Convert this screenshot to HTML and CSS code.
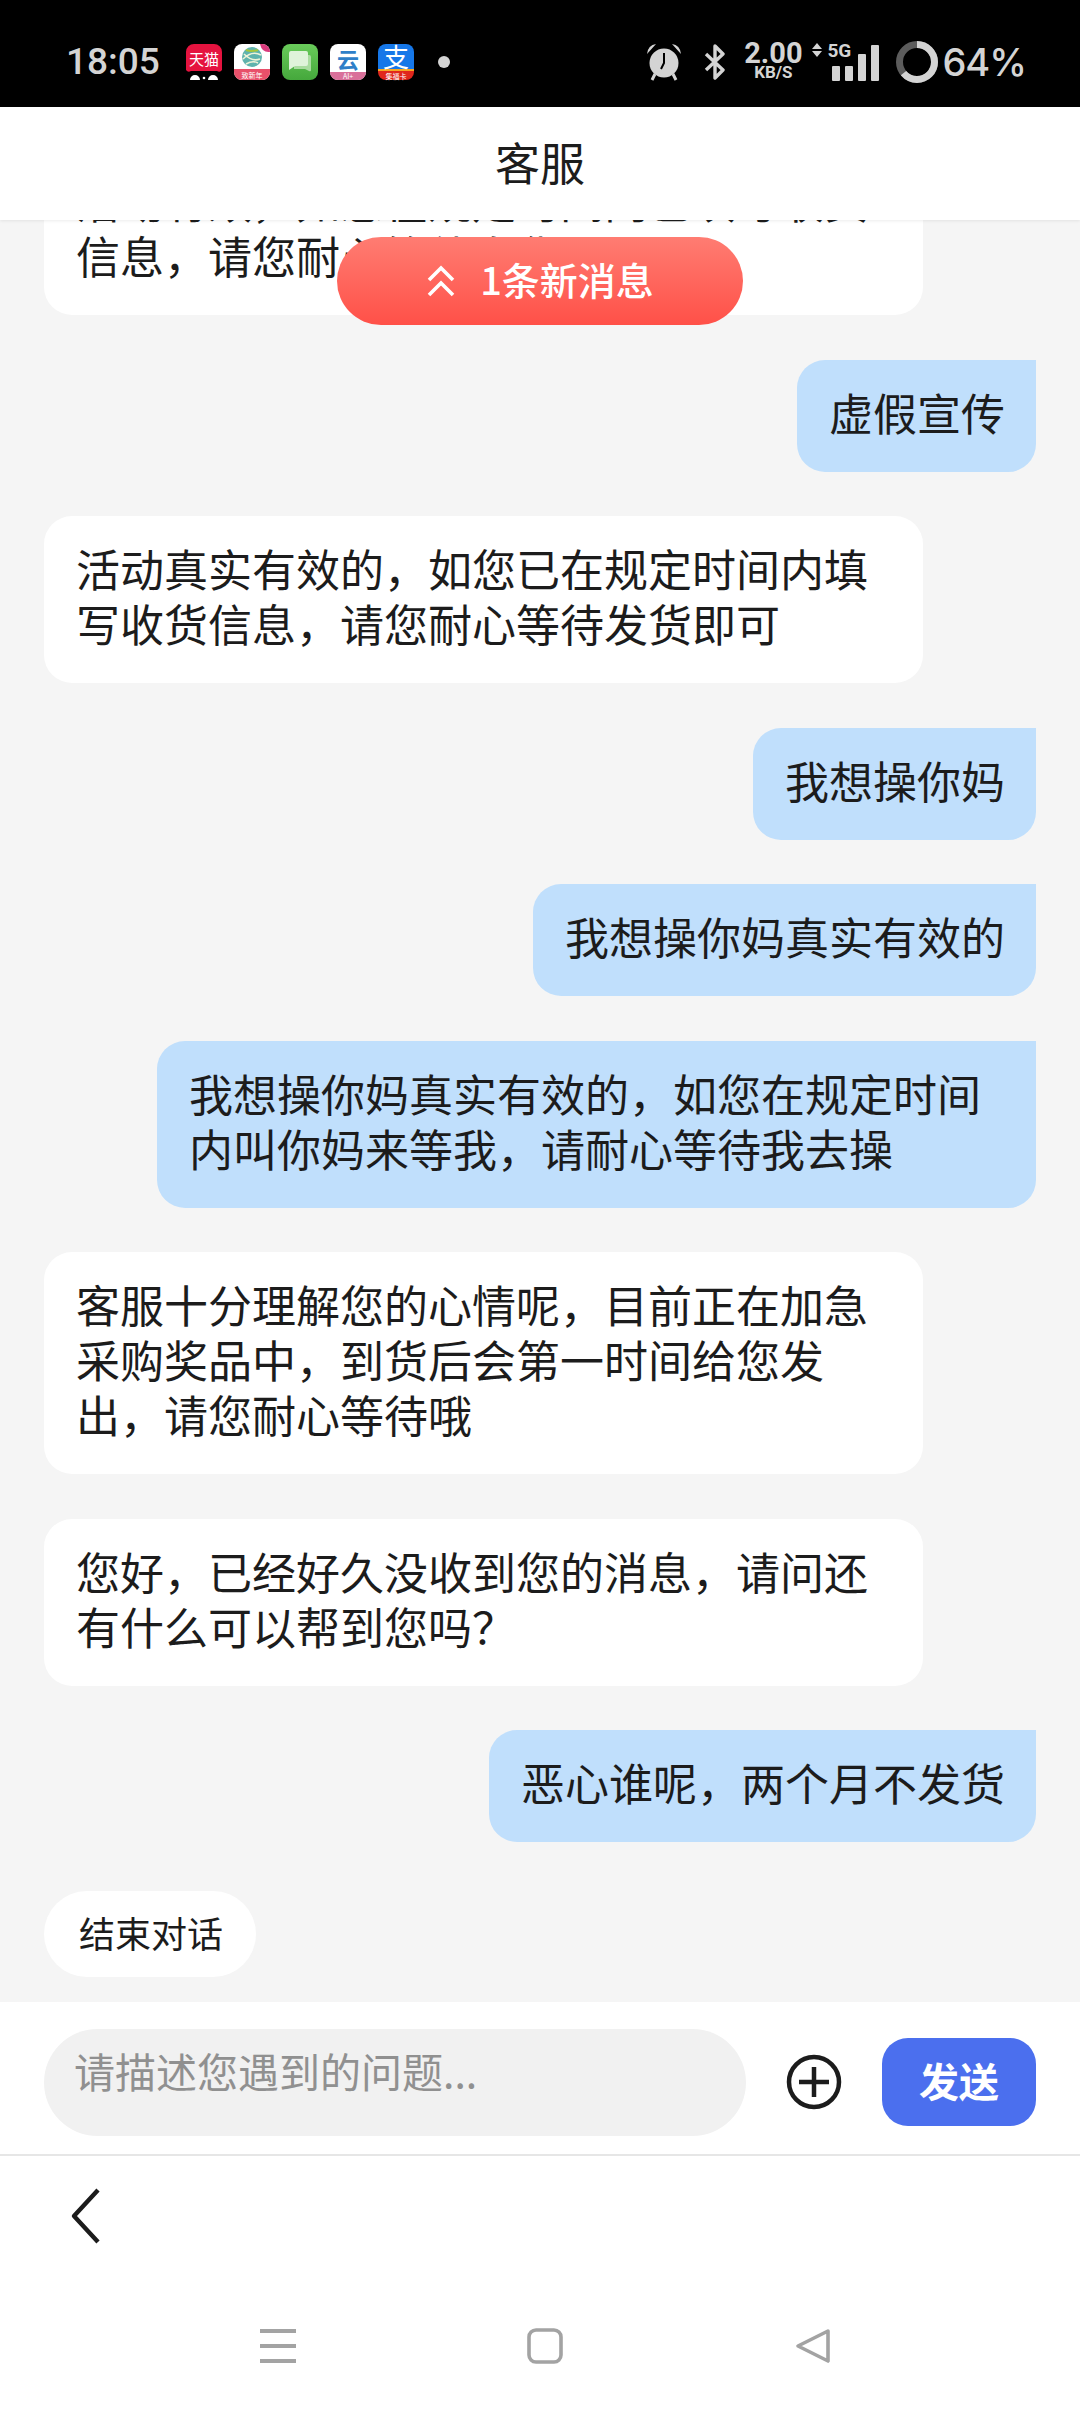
FILE: index.html
```html
<!DOCTYPE html>
<html lang="zh-CN">
<head>
    <meta charset="UTF-8">
    <meta name="viewport" content="width=device-width, initial-scale=1.0">
    <title>客服</title>
    <link rel="stylesheet" href="styles.css">
</head>
<body>
    <div class="page">
        <div class="status-bar">
            <div class="status-left">
                <span class="time">18:05</span>
                <div class="app-icons">
                    <svg class="app-icon" viewBox="0 0 36 36">
                        <path d="M8 0h20a8 8 0 0 1 8 8v18q-2 3-5 1H5q-3 2-5-1V8a8 8 0 0 1 8-8z" fill="#e5133f"/>
                        <text x="18" y="21" class="app-text tmall">天猫</text>
                        <path d="M4 36a5 5 0 0 1 10 0zM22 36a5 5 0 0 1 10 0z" fill="#fff"/>
                        <circle cx="18" cy="34" r="1.3" fill="#fff"/>
                    </svg>
                    <svg class="app-icon" viewBox="0 0 36 36">
                        <rect width="36" height="36" rx="8" fill="#fff"/>
                        <path d="M0 25h36v3a8 8 0 0 1-8 8H8a8 8 0 0 1-8-8z" fill="#e8506a"/>
                        <circle cx="18" cy="13" r="10" fill="#5fb3ad"/>
                        <path d="M9 15q9-9 18-4M10 10q8 8 16 5M12 20q7-4 12-1" fill="none" stroke="#eef3d8" stroke-width="1.6"/>
                        <path d="M12 6q6 2 12 0" fill="none" stroke="#a5c63c" stroke-width="2"/>
                        <path d="M26 0h2a8 8 0 0 1 8 8 q-8 1-10-8z" fill="#d93a7c"/>
                        <text x="18" y="34" class="app-text tiny">致新年</text>
                    </svg>
                    <svg class="app-icon" viewBox="0 0 36 36">
                        <defs>
                            <linearGradient id="msgBg" x1="0" y1="0" x2="0" y2="1">
                                <stop offset="0" stop-color="#69cb5a"/>
                                <stop offset="1" stop-color="#45a83c"/>
                            </linearGradient>
                        </defs>
                        <rect width="36" height="36" rx="8" fill="url(#msgBg)"/>
                        <path d="M12 11h15a2 2 0 0 1 2 2v13q0 2-2 1l-4-2H12z" fill="#a9dca0"/>
                        <path d="M9 7h15a2 2 0 0 1 2 2v11a2 2 0 0 1-2 2H13l-6 4V9a2 2 0 0 1 2-2z" fill="#dff3da"/>
                    </svg>
                    <svg class="app-icon" viewBox="0 0 36 36">
                        <rect width="36" height="36" rx="8" fill="#fff"/>
                        <path d="M0 28h36a8 8 0 0 1-8 8H8a8 8 0 0 1-8-8z" fill="#d9709a"/>
                        <text x="18" y="24" class="app-text cloud">云</text>
                        <text x="18" y="35" class="app-text tiny">AI+</text>
                    </svg>
                    <svg class="app-icon" viewBox="0 0 36 36">
                        <path d="M8 0h20a8 8 0 0 1 8 8v18H0V8a8 8 0 0 1 8-8z" fill="#1677e8"/>
                        <path d="M0 26h36v2a8 8 0 0 1-8 8H8a8 8 0 0 1-8-8z" fill="#e0261c"/>
                        <rect y="25" width="36" height="2" fill="#f5a623"/>
                        <text x="18" y="23" class="app-text pay">支</text>
                        <text x="18" y="34.5" class="app-text tiny">集福卡</text>
                    </svg>
                </div>
                <span class="more-dot"></span>
            </div>
            <div class="status-right">
                <svg class="alarm" viewBox="0 0 38 38">
                    <path d="M2 11Q3 2 11 1zM36 11Q35 2 27 1z" fill="#d4d4d4"/>
                    <circle cx="19" cy="20" r="14.5" fill="#d4d4d4"/>
                    <path d="M19 10v10l-3 6" fill="none" stroke="#000" stroke-width="2"/>
                    <path d="M10 31l-3 6M28 31l3 6" stroke="#d4d4d4" stroke-width="3"/>
                </svg>
                <svg class="bluetooth" viewBox="0 0 22 36">
                    <path d="M2 10l17 16-8 8V2l8 8L2 26" fill="none" stroke="#d4d4d4" stroke-width="3.4" stroke-linejoin="round"/>
                </svg>
                <div class="speed">
                    <span class="speed-num">2.00</span>
                    <span class="speed-unit">KB/S</span>
                </div>
                <div class="signal">
                    <svg class="updown" viewBox="0 0 10 14">
                        <path d="M5 0l5 6H0zM5 14L0 8h10z" fill="#d4d4d4"/>
                    </svg>
                    <span class="net-type">5G</span>
                    <div class="bars">
                        <span class="bar bar-1"></span>
                        <span class="bar bar-2"></span>
                        <span class="bar bar-3"></span>
                        <span class="bar bar-4"></span>
                    </div>
                </div>
                <svg class="battery-ring" viewBox="0 0 42 42">
                    <circle cx="21" cy="21" r="17.5" fill="none" stroke="#5c5c5c" stroke-width="7"/>
                    <circle cx="21" cy="21" r="17.5" fill="none" stroke="#d4d4d4" stroke-width="7" pathLength="100" stroke-dasharray="64 36" transform="rotate(-90 21 21)"/>
                </svg>
                <span class="battery-text">64%</span>
            </div>
        </div>

        <div class="title-bar">客服</div>

        <div class="chat">
            <div class="chat-list">
                <div class="msg msg-left">活动有效，如您在规定时间内已填写收货信息，请您耐心等待发货即可</div>
                <div class="msg msg-right">虚假宣传</div>
                <div class="msg msg-left">活动真实有效的，如您已在规定时间内填写收货信息，请您耐心等待发货即可</div>
                <div class="msg msg-right">我想操你妈</div>
                <div class="msg msg-right">我想操你妈真实有效的</div>
                <div class="msg msg-right">我想操你妈真实有效的，如您在规定时间内叫你妈来等我，请耐心等待我去操</div>
                <div class="msg msg-left">客服十分理解您的心情呢，目前正在加急采购奖品中，到货后会第一时间给您发出，请您耐心等待哦</div>
                <div class="msg msg-left">您好，已经好久没收到您的消息，请问还有什么可以帮到您吗？</div>
                <div class="msg msg-right">恶心谁呢，两个月不发货</div>
            </div>
            <div class="end-chat">结束对话</div>
            <div class="new-msg">
                <svg class="new-msg-arrow" viewBox="0 0 30 32">
                    <path d="M3 15L15 3l12 12M3 30l12-12 12 12" fill="none" stroke="#fff" stroke-width="3.6"/>
                </svg>
                <span class="new-msg-text">1条新消息</span>
            </div>
        </div>

        <div class="composer">
            <div class="composer-input">请描述您遇到的问题...</div>
            <svg class="add-btn" viewBox="0 0 56 56">
                <circle cx="28" cy="28" r="25" fill="none" stroke="#1c1c1c" stroke-width="4.5"/>
                <path d="M13 28h30M28 13v30" stroke="#1c1c1c" stroke-width="4.5"/>
            </svg>
            <div class="send-btn">发送</div>
        </div>

        <div class="back-bar">
            <svg class="back-icon" viewBox="0 0 30 56">
                <path d="M27 2L3 28l24 26" fill="none" stroke="#1c1c1c" stroke-width="4.4" stroke-linejoin="round"/>
            </svg>
        </div>

        <div class="nav-bar">
            <svg class="nav-icon" viewBox="0 0 40 36">
                <path d="M2 3h36M2 18h36M2 33h36" stroke="#a3a3a3" stroke-width="4"/>
            </svg>
            <svg class="nav-icon" viewBox="0 0 40 36">
                <rect x="4" y="2" width="32" height="32" rx="7" fill="none" stroke="#a3a3a3" stroke-width="3.6"/>
            </svg>
            <svg class="nav-icon" viewBox="0 0 40 36">
                <path d="M36 3L6 18l30 15z" fill="none" stroke="#a3a3a3" stroke-width="3.6" stroke-linejoin="round"/>
            </svg>
        </div>
    </div>
</body>
</html>
```

FILE: styles.css
```css
body {
    margin: 0;
    background-color: #fff;
    font-family: "Noto Sans CJK SC", "Noto Sans", sans-serif;
    color: #1c1c1c;
}
.page {
    width: 1080px;
    height: 2412px;
    display: flex;
    flex-direction: column;
    overflow: hidden;
}

/* status bar */
.status-bar {
    height: 107px;
    flex-shrink: 0;
    background-color: #000;
    color: #d4d4d4;
    display: flex;
    justify-content: space-between;
    align-items: center;
    padding: 16px 54px 0 66px;
    box-sizing: border-box;
}
.status-left, .status-right {
    display: flex;
    align-items: center;
}
.time {
    font-family: Roboto, sans-serif;
    font-size: 37px;
    font-weight: 500;
    width: 120px;
}
.app-icons {
    display: flex;
    gap: 12px;
}
.app-icon {
    width: 36px;
    height: 36px;
    overflow: visible;
}
.app-text {
    text-anchor: middle;
    fill: #fff;
    font-family: "Noto Sans CJK SC", sans-serif;
}
.tmall {
    font-size: 15px;
}
.tiny {
    font-size: 7px;
}
.cloud {
    font-size: 22px;
    font-weight: 700;
    fill: #2f7fc8;
}
.pay {
    font-size: 26px;
}
.more-dot {
    width: 12px;
    height: 12px;
    border-radius: 50%;
    background-color: #d4d4d4;
    margin-left: 24px;
}
.alarm {
    width: 38px;
    height: 38px;
}
.bluetooth {
    width: 22px;
    height: 36px;
    margin-left: 21px;
}
.speed {
    margin-left: 18px;
    width: 58px;
    display: flex;
    flex-direction: column;
    align-items: center;
    font-family: Roboto, sans-serif;
    font-weight: 700;
}
.speed-num {
    font-size: 29px;
    line-height: 21px;
}
.speed-unit {
    font-size: 17px;
    line-height: 16px;
}
.signal {
    position: relative;
    width: 67px;
    height: 38px;
    margin-left: 10px;
}
.updown {
    position: absolute;
    left: 0;
    top: 0;
    width: 10px;
    height: 14px;
}
.net-type {
    position: absolute;
    left: 15px;
    top: -3px;
    font-family: Roboto, sans-serif;
    font-size: 19px;
    line-height: 22px;
    font-weight: 700;
}
.bars {
    position: absolute;
    right: 0;
    bottom: 0;
    display: flex;
    align-items: flex-end;
    gap: 5px;
}
.bar {
    width: 8px;
    background-color: #d4d4d4;
    border-radius: 1px;
}
.bar-1, .bar-2 {
    height: 15px;
}
.bar-3 {
    height: 27px;
}
.bar-4 {
    height: 36px;
}
.battery-ring {
    width: 42px;
    height: 42px;
    margin-left: 17px;
}
.battery-text {
    font-family: Inter, sans-serif;
    font-size: 38px;
    font-weight: 500;
    letter-spacing: -1px;
    margin-left: 4px;
}

/* header */
.title-bar {
    height: 113px;
    flex-shrink: 0;
    background-color: #fff;
    display: flex;
    justify-content: center;
    align-items: center;
    padding-bottom: 4px;
    box-sizing: border-box;
    font-size: 45px;
    box-shadow: 0 1px 3px rgba(0, 0, 0, 0.08);
    position: relative;
    z-index: 2;
}

/* messages */
.chat {
    position: relative;
    flex: 1;
    min-height: 0;
    overflow: hidden;
    background-color: #f5f5f5;
    padding: 0 44px;
}
.chat-list {
    display: flex;
    flex-direction: column;
    gap: 44.5px;
    margin-top: -72px;
}
.msg {
    max-width: 879px;
    width: fit-content;
    box-sizing: border-box;
    padding: 25px 32px 32px;
    font-size: 44px;
    line-height: 55px;
    border-radius: 28px;
}
.msg-left {
    width: 879px;
    background-color: #fff;
}
.msg-right {
    align-self: flex-end;
    padding-right: 31px;
    background-color: #c0dffc;
    border-top-right-radius: 0;
}
.end-chat {
    width: fit-content;
    margin-top: 49px;
    padding: 0 33px 0 35px;
    height: 86px;
    line-height: 83px;
    border-radius: 43px;
    background-color: #fff;
    font-size: 36px;
}
.new-msg {
    position: absolute;
    left: 337px;
    top: 17px;
    width: 406px;
    height: 88px;
    border-radius: 44px;
    background: linear-gradient(#ff7c72, #ff5048);
    color: #fff;
    display: flex;
    justify-content: center;
    align-items: center;
    gap: 24px;
    font-size: 38px;
    font-weight: 500;
}
.new-msg-text {
    margin-bottom: 6px;
}
.new-msg-arrow {
    width: 30px;
    height: 32px;
}

/* input row */
.composer {
    height: 154px;
    flex-shrink: 0;
    box-sizing: border-box;
    background-color: #fff;
    display: flex;
    align-items: center;
    padding: 8px 44px 0;
    border-bottom: 2px solid #e6e6e6;
}
.composer-input {
    width: 702px;
    height: 107px;
    box-sizing: border-box;
    padding: 3px 30px 0;
    line-height: 76px;
    border-radius: 54px;
    background-color: #f1f1f1;
    color: #909090;
    font-size: 41px;
}
.add-btn {
    width: 56px;
    height: 56px;
    margin-left: 40px;
}
.send-btn {
    width: 154px;
    height: 88px;
    line-height: 84px;
    margin-left: auto;
    text-align: center;
    border-radius: 26px;
    background-color: #4b6fee;
    color: #fff;
    font-size: 40px;
    font-weight: 700;
}

/* bottom bars */
.back-bar {
    height: 172px;
    flex-shrink: 0;
    box-sizing: border-box;
    padding: 32px 0 0 71px;
    background-color: #fff;
}
.back-icon {
    width: 30px;
    height: 56px;
}
.nav-bar {
    height: 84px;
    flex-shrink: 0;
    display: flex;
    justify-content: center;
    gap: 227px;
    padding-left: 10px;
    background-color: #fff;
}
.nav-icon {
    width: 40px;
    height: 36px;
}
```
